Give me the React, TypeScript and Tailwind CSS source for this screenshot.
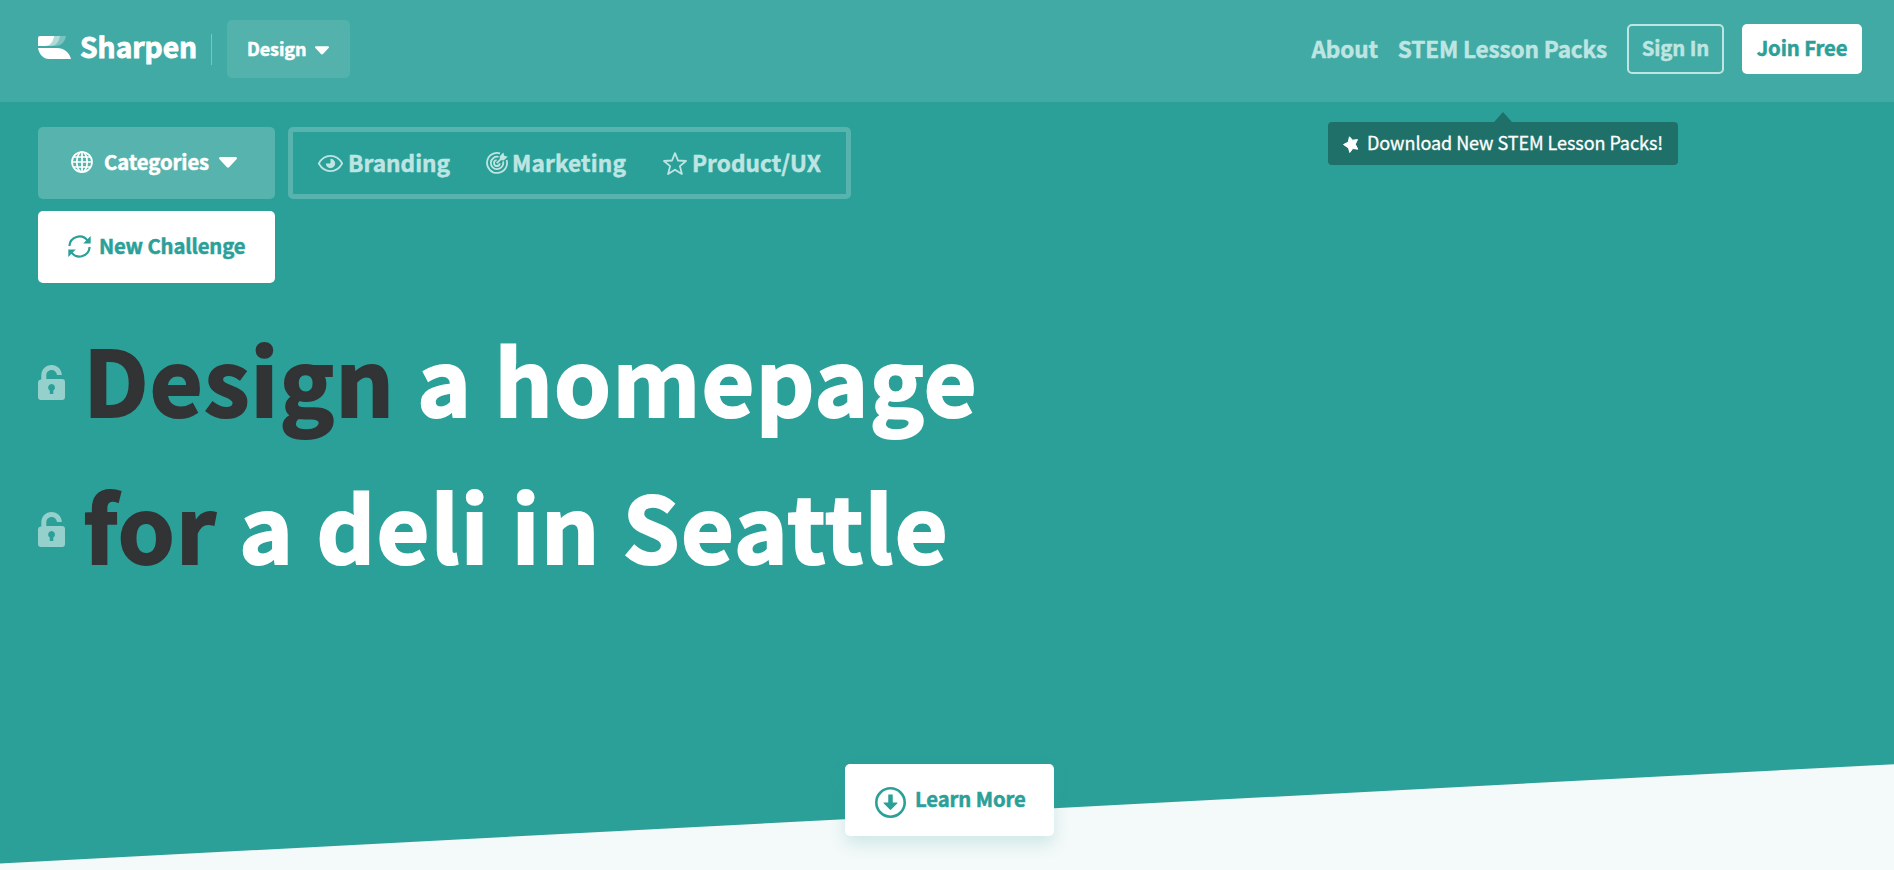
import React from "react";

const font = "font-['Noto_Sans_CJK_SC','Noto_Sans',sans-serif]";

function Caret({ className }: { className: string }) {
  return (
    <svg viewBox="0 0 18 11" className={className} fill="currentColor">
      <path d="M1.4 0h15.2c1.2 0 1.8 1.4.9 2.2l-7.2 7.9c-.7.8-1.9.8-2.6 0L.5 2.2C-.4 1.4.2 0 1.4 0z" />
    </svg>
  );
}

function Lock() {
  return (
    <svg viewBox="0 0 27 35" className="mt-[10px] h-[35px] w-[27px] shrink-0 text-[#95d0cc]">
      <path
        fill="currentColor"
        fillRule="evenodd"
        d="M3.300 14.500V10.500C3.300 4.500 7.800 0 13.600 0 19.200 0 23.500 4.200 23.900 10H19C18.600 7 16.500 5 13.600 5 10.500 5 8.300 7.300 8.300 10.500V14H24a3 3 0 0 1 3 3v15a3 3 0 0 1-3 3H3a3 3 0 0 1-3-3V17a3 3 0 0 1 3.300-2.500zM13.600 19a3.500 3.500 0 0 0-1.800 6.500V29h3.500v-3.500A3.500 3.500 0 0 0 13.600 19z"
      />
    </svg>
  );
}

function Logo() {
  return (
    <svg viewBox="0 0 33 23" className="h-[23px] w-[33px]">
      <path d="M14 0h14c-1 6-5 10-11 10H6z" fill="#fff" fillOpacity=".3" />
      <path d="M10 0h12c-1 6-4 10-10 10H4z" fill="#fff" fillOpacity=".4" />
      <path d="M2 0h14c-.6 6-4 10-9.500 10H0V2a2 2 0 0 1 2-2z" fill="#fff" />
      <path d="M0 12h19c7 0 12 4 14 11H11C5 23 1 18 0 12z" fill="#fff" />
    </svg>
  );
}

function Globe() {
  return (
    <svg viewBox="0 0 22 22" className="h-[22px] w-[22px]" fill="none" stroke="currentColor" strokeWidth="1.700">
      <circle cx="11" cy="11" r="10" />
      <ellipse cx="11" cy="11" rx="5.200" ry="10" />
      <path d="M11 1v20M1 11h20M2.500 6h17M2.500 16h17" />
    </svg>
  );
}

function Refresh() {
  return (
    <svg viewBox="0 0 23 23" className="h-[23px] w-[23px]" fill="none" stroke="currentColor" strokeWidth="2.200">
      <path d="M1.400 11A10.100 10.100 0 0 1 19.400 5.400M21.600 12A10.100 10.100 0 0 1 3.600 17.600" />
      <path d="M22.700 1v7.500h-7.500zM.300 22v-7.500h7.500z" fill="currentColor" stroke="none" />
    </svg>
  );
}

function Eye() {
  return (
    <svg viewBox="0 0 25 17" className="h-[17px] w-[25px]">
      <path d="M.8 8.500C3.600 3.500 7.800.9 12.500.9s8.900 2.600 11.700 7.600c-2.800 5-7 7.600-11.700 7.600S3.600 13.500.8 8.500z" fill="none" stroke="currentColor" strokeWidth="1.700" />
      <path d="M12.500 3.800a4.700 4.700 0 1 1-4.700 4.700h3.500c.8 0 1.200-.4 1.200-1.100z" fill="currentColor" />
    </svg>
  );
}

function Target() {
  return (
    <svg viewBox="0 0 22 22" className="h-[22px] w-[22px]" fill="none" stroke="currentColor" strokeWidth="1.800">
      <path d="M14 1.400A10 10 0 1 0 20.600 8M12.500 4.900A6.200 6.200 0 1 0 17.100 9.500" />
      <path d="M10.600 8.200a2.900 2.900 0 1 0 3.200 3.200M10.800 11.200l6-6" />
      <path d="M13.600 4.500L17.300.5l1 3.200 3.500 1-4.200 3.800-3.500-.5z" fill="currentColor" stroke="none" />
    </svg>
  );
}

function Star() {
  return (
    <svg viewBox="0 0 24 23" className="h-[23px] w-[24px]" fill="none" stroke="currentColor" strokeWidth="1.800" strokeLinejoin="round">
      <path d="M12 1.200l3 7.300 8 .5-6.100 5.100 2 7.900L12 17.700 5.100 22l2-7.900L1 9l8-.5z" />
    </svg>
  );
}

export default function App() {
  return (
    <div className={`relative flex h-[870px] w-full flex-col overflow-hidden bg-[#2ba099] font-bold text-white [-webkit-text-stroke:0.5px_currentColor] ${font}`}>
      <header className="flex h-[102px] shrink-0 items-start bg-[#41aaa4] pr-[32px] pl-[38px]">
        <div className="mt-[36px]"><Logo /></div>
        <div className="mt-[23px] ml-[9px] w-[118px] text-[28.200px] leading-[46px] whitespace-nowrap [-webkit-text-stroke:0.9px_currentColor]">Sharpen</div>
        <div className="mt-[34px] ml-[13px] h-[31px] w-px bg-[#7bc5c1]" />
        <button className="mt-[20px] ml-[15px] flex h-[58px] w-[123px] items-center rounded-[5px] bg-[#54b2ad] pl-[20px]">
          <span className="mb-[2px] w-[61px] text-left text-[18px] leading-[28px] tracking-[-0.1px]">Design</span>
          <Caret className="mt-[3px] ml-[7px] h-[9px] w-[14px]" />
        </button>
        <nav className="ml-auto flex items-start text-[#bfe5e2]">
          <a className="mt-[32px] text-[22.600px] leading-[34px] tracking-[-0.15px]">About</a>
          <a className="mt-[32px] ml-[20px] text-[22.600px] leading-[34px] tracking-[-0.18px]">STEM Lesson Packs</a>
          <a className="mt-[24px] ml-[20px] flex h-[50px] w-[97px] justify-center rounded-[5px] border-2 border-current text-[20.300px] leading-[43px] tracking-[-0.1px]">Sign In</a>
          <a className="mt-[24px] ml-[18px] flex h-[50px] w-[120px] justify-center rounded-[5px] bg-white text-[20.300px] leading-[47px] tracking-[-0.1px] text-[#2ba099]">Join Free</a>
        </nav>
      </header>

      <div className="absolute top-[122px] left-[1328px] flex h-[43px] w-[350px] items-center rounded-[4px] bg-[#1e7069] pl-[15px] text-[18px] font-normal whitespace-nowrap [-webkit-text-stroke:0.3px_currentColor]">
        <svg viewBox="0 0 20 11" className="absolute -top-[10px] left-[165px] h-[11px] w-[20px]" fill="#1e7069">
          <path d="M10 0l9.800 11H.2z" />
        </svg>
        <svg viewBox="0 0 16 17" className="mt-[2px] h-[17px] w-[16px]" fill="currentColor">
          <path d="M6.500.8l3 3.400 5-.6-2.200 4.600 2.500 5-5-.7-3 4-1.300-4.500L.500 8.500l4.700-2.300z" stroke="currentColor" strokeLinejoin="round" />
        </svg>
        <span className="mb-[3px] ml-[8px] leading-[28px] tracking-[-0.06px]">Download New STEM Lesson Packs!</span>
      </div>

      <main className="flex flex-col items-start pt-[25px] pl-[38px]">
        <div className="flex">
          <button className="flex h-[72px] w-[237px] items-center rounded-[5px] bg-[#56b3ad] pb-[2px] pl-[33px]">
            <Globe />
            <span className="mb-[2px] ml-[11px] w-[105px] text-left text-[20.300px] leading-[30px] tracking-[-0.08px]">Categories</span>
            <Caret className="ml-[10px] h-[11px] w-[18px]" />
          </button>
          <div className="ml-[13px] flex h-[72px] w-[563px] items-center rounded-[5px] border-[5px] border-[#56b3ad] pl-[25px] text-[22.600px] leading-[34px] text-[#bfe5e2]">
            <Eye />
            <span className="ml-[5px] w-[103px] tracking-[0.05px]">Branding</span>
            <span className="ml-[35px]"><Target /></span>
            <span className="ml-[4px] w-[116px] tracking-[0.15px]">Marketing</span>
            <span className="ml-[35px]"><Star /></span>
            <span className="ml-[5px] tracking-[0.05px]">Product/UX</span>
          </div>
        </div>
        <button className="mt-[12px] flex h-[72px] w-[237px] items-center rounded-[5px] bg-white pb-[2px] pl-[30px] text-[#2ba099]">
          <Refresh />
          <span className="mb-[2px] ml-[8px] text-[20.300px] leading-[30px] tracking-[-0.15px] whitespace-nowrap">New Challenge</span>
        </button>
        <h1 className="mt-[21px] text-[91px] leading-[147px] tracking-[1.4px] whitespace-nowrap [-webkit-text-stroke:2.200px_currentColor]">
          <div className="flex h-[147px] items-center">
            <Lock />
            <span className="ml-[18.500px]"><span className="text-[#323334]">Design</span> a homepage</span>
          </div>
          <div className="flex h-[147px] items-center">
            <Lock />
            <span className="ml-[18.500px]"><span className="text-[#323334]">for</span> a deli in Seattle</span>
          </div>
        </h1>
      </main>

      <svg viewBox="0 0 1894 110" className="absolute bottom-0 left-0 h-[110px] w-full" preserveAspectRatio="none">
        <path d="M0 103.500L1894 4.200V110H0z" fill="#f4f9f9" />
      </svg>
      <button className="absolute top-[764px] left-[845px] flex h-[72px] w-[209px] items-center rounded-[5px] bg-white pl-[30px] text-[#2ba099] shadow-[0_8px_16px_rgba(43,160,153,0.18)]">
        <svg viewBox="0 0 31 31" className="mt-[5px] h-[31px] w-[31px]" fill="none" stroke="currentColor">
          <circle cx="15.500" cy="15.500" r="14.200" strokeWidth="2.600" />
          <path d="M15.500 7.500v9" strokeWidth="4.500" />
          <path d="M9.200 15.500h12.600c.6 0 .8.600.4 1l-6 6.100c-.4.400-1 .400-1.400 0l-6-6.100c-.4-.4-.2-1 .4-1z" fill="currentColor" stroke="none" />
        </svg>
        <span className="mb-[4px] ml-[9px] text-[20.300px] leading-[30px] tracking-[-0.1px]">Learn More</span>
      </button>
    </div>
  );
}
